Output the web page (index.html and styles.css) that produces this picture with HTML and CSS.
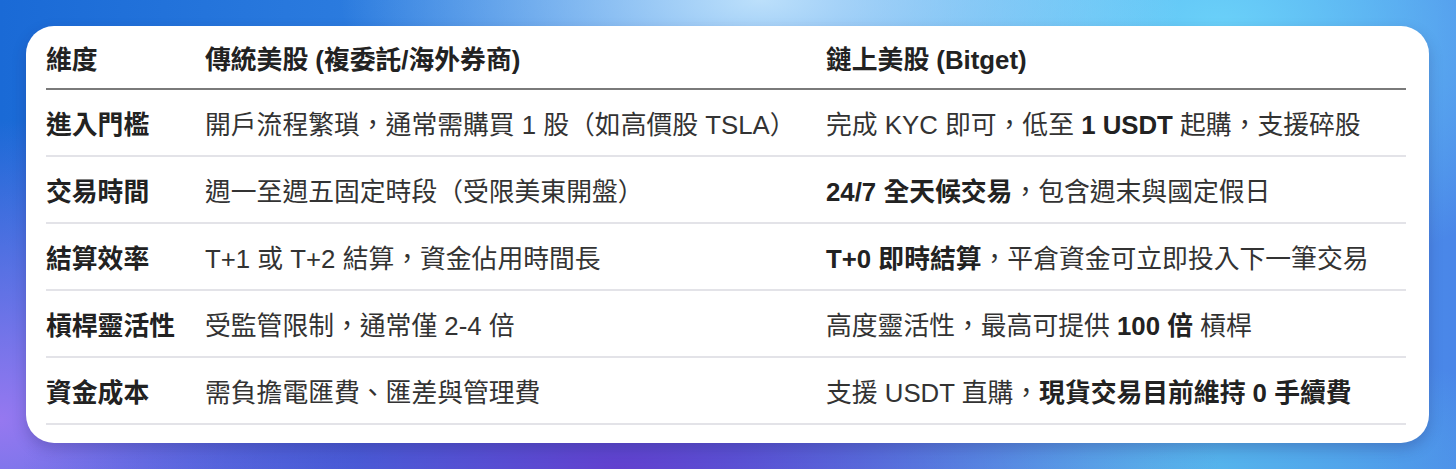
FILE: index.html
```html
<!DOCTYPE html>
<html lang="zh-Hant">
<head>
<meta charset="utf-8">
<link rel="stylesheet" href="styles.css">
</head>
<body>
<div class="bg">
  <div class="card">
    <div class="table">
      <div class="row head">
        <div class="cell c1">維度</div>
        <div class="cell c2">傳統美股 (複委託/海外券商)</div>
        <div class="cell c3">鏈上美股 (Bitget)</div>
      </div>
      <div class="row">
        <div class="cell c1"><b>進入門檻</b></div>
        <div class="cell c2">開戶流程繁瑣，通常需購買 1 股（如高價股 TSLA）</div>
        <div class="cell c3">完成 KYC 即可，低至 <b>1 USDT</b> 起購，支援碎股</div>
      </div>
      <div class="row">
        <div class="cell c1"><b>交易時間</b></div>
        <div class="cell c2">週一至週五固定時段（受限美東開盤）</div>
        <div class="cell c3"><b>24/7 全天候交易</b>，包含週末與國定假日</div>
      </div>
      <div class="row">
        <div class="cell c1"><b>結算效率</b></div>
        <div class="cell c2">T+1 或 T+2 結算，資金佔用時間長</div>
        <div class="cell c3"><b>T+0 即時結算</b>，平倉資金可立即投入下一筆交易</div>
      </div>
      <div class="row">
        <div class="cell c1"><b>槓桿靈活性</b></div>
        <div class="cell c2">受監管限制，通常僅 2-4 倍</div>
        <div class="cell c3">高度靈活性，最高可提供 <b>100 倍</b> 槓桿</div>
      </div>
      <div class="row">
        <div class="cell c1"><b>資金成本</b></div>
        <div class="cell c2">需負擔電匯費、匯差與管理費</div>
        <div class="cell c3">支援 USDT 直購，<b>現貨交易目前維持 0 手續費</b></div>
      </div>
    </div>
  </div>
</div>
</body>
</html>
```

FILE: styles.css
```css
html, body {
  margin: 0;
  padding: 0;
}
body {
  width: 1456px;
  height: 469px;
  overflow: hidden;
  font-family: "Liberation Sans", "Noto Sans CJK TC", sans-serif;
}
.bg {
  width: 1456px;
  height: 469px;
  box-sizing: border-box;
  padding: 26px 27px 0 26px;
  background:
    radial-gradient(ellipse 420px 170px at 760px 0px, rgba(195,228,252,0.95), rgba(195,228,252,0) 100%),
    radial-gradient(ellipse 380px 260px at 1220px 30px, rgba(110,215,250,0.9), rgba(110,215,250,0) 100%),
    radial-gradient(ellipse 600px 200px at 620px 469px, rgba(100,60,205,0.95), rgba(100,60,205,0) 100%),
    radial-gradient(ellipse 360px 300px at 0px 420px, rgba(150,120,240,1), rgba(150,120,240,0) 100%),
    radial-gradient(ellipse 420px 140px at 1150px 469px, rgba(90,190,235,0.8), rgba(90,190,235,0) 100%),
    linear-gradient(90deg, #1a6ad6 0%, #3a8ae6 45%, #4aa8f0 75%, #4a86e8 100%);
}
.card {
  width: 1403px;
  height: 417px;
  box-sizing: border-box;
  background: #fff;
  border-radius: 28px;
  padding: 0 23px 0 20px;
  box-shadow: 0 6px 14px rgba(40, 30, 100, 0.25);
}
.table {
  display: flex;
  flex-direction: column;
}
.row {
  display: grid;
  grid-template-columns: 159px 621px 1fr;
  align-items: center;
  height: 67px;
  border-bottom: 2px solid #e3e3e8;
  box-sizing: border-box;
  font-size: 25.8px;
  color: #333;
}
.row.head {
  height: 64px;
  border-bottom: 2px solid #7a7a7a;
  font-weight: 700;
  color: #222;
}
.cell {
  white-space: nowrap;
}
b {
  font-weight: 700;
  color: #222;
}
```
